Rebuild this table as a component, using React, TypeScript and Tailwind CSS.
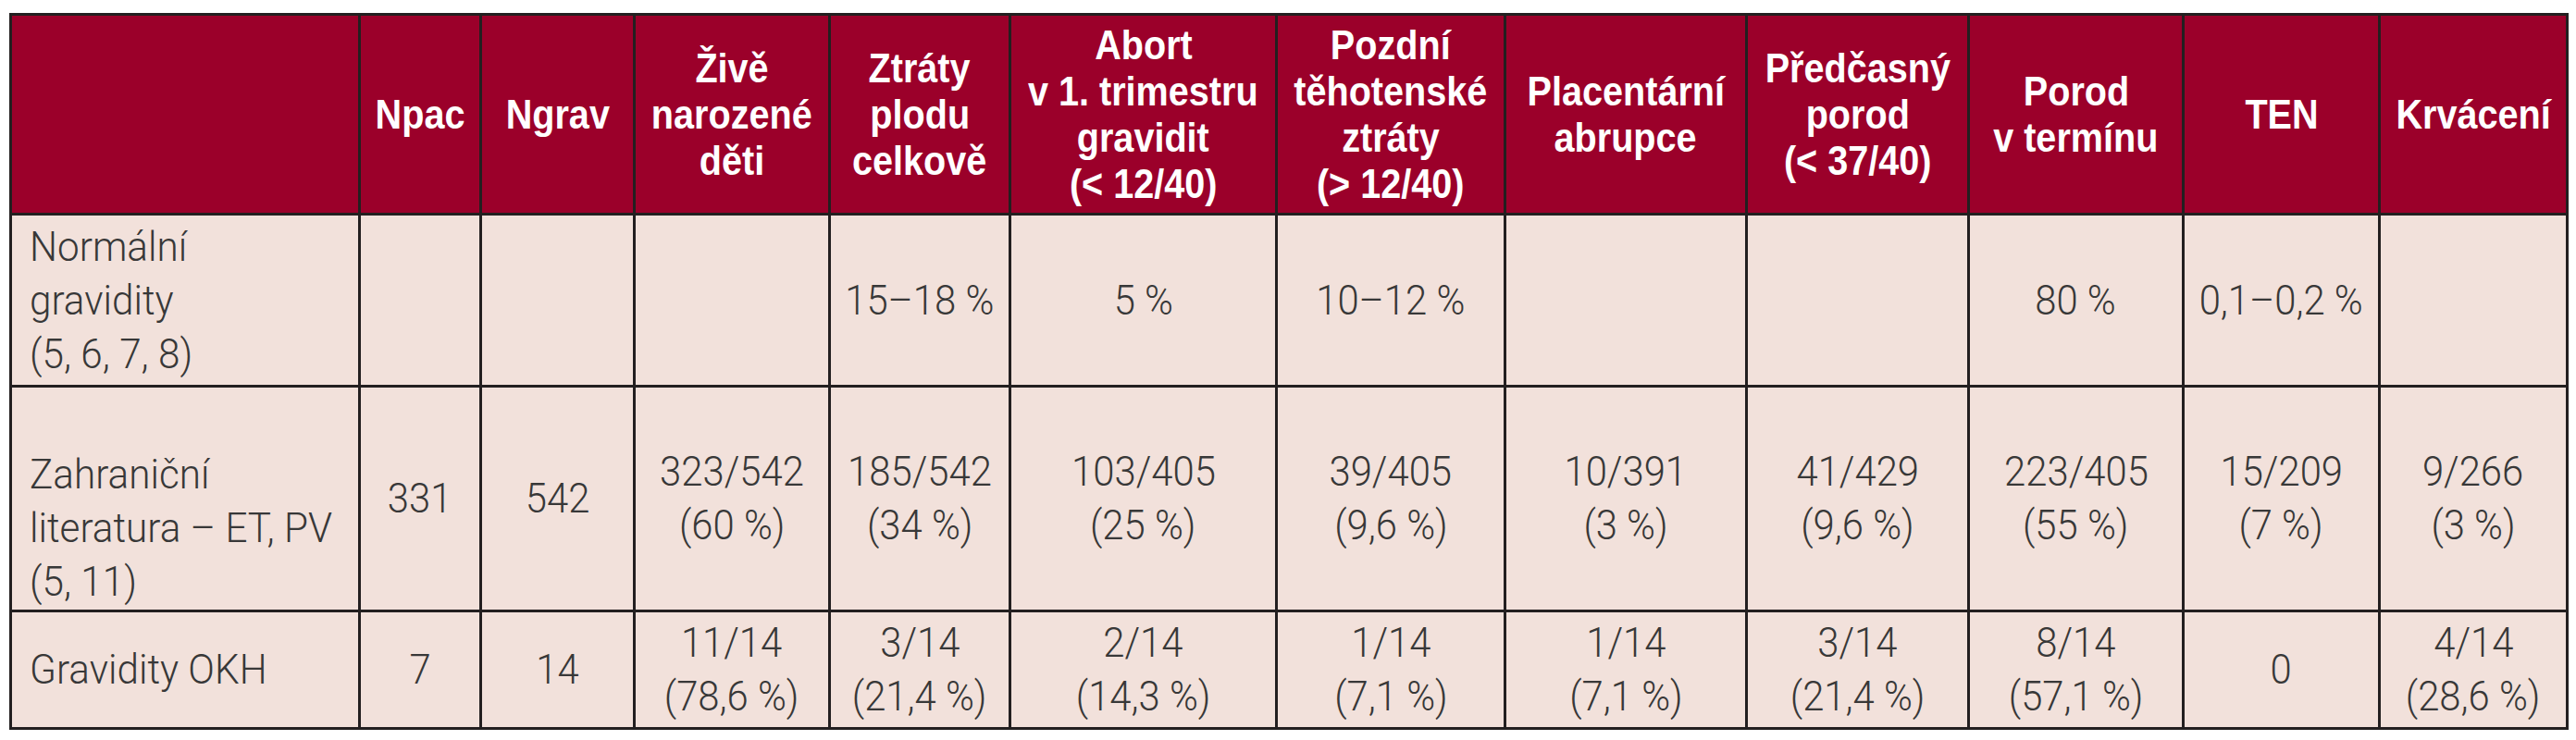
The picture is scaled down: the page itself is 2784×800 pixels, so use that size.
const headers: string[][] = [
  [],
  ["Npac"],
  ["Ngrav"],
  ["Živě", "narozené", "děti"],
  ["Ztráty", "plodu", "celkově"],
  ["Abort", "v 1. trimestru", "gravidit", "(< 12/40)"],
  ["Pozdní", "těhotenské", "ztráty", "(> 12/40)"],
  ["Placentární", "abrupce"],
  ["Předčasný", "porod", "(< 37/40)"],
  ["Porod", "v termínu"],
  ["TEN"],
  ["Krvácení"],
];

type Row = { label: string[]; labelAlign: "center" | "end"; cells: string[][] };

const rows: Row[] = [
  {
    label: ["Normální", "gravidity", "(5, 6, 7, 8)"],
    labelAlign: "center",
    cells: [[], [], [], ["15–18 %"], ["5 %"], ["10–12 %"], [], [], ["80 %"], ["0,1–0,2 %"], []],
  },
  {
    label: ["Zahraniční", "literatura – ET, PV", "(5, 11)"],
    labelAlign: "end",
    cells: [
      ["331"],
      ["542"],
      ["323/542", "(60 %)"],
      ["185/542", "(34 %)"],
      ["103/405", "(25 %)"],
      ["39/405", "(9,6 %)"],
      ["10/391", "(3 %)"],
      ["41/429", "(9,6 %)"],
      ["223/405", "(55 %)"],
      ["15/209", "(7 %)"],
      ["9/266", "(3 %)"],
    ],
  },
  {
    label: ["Gravidity OKH"],
    labelAlign: "center",
    cells: [
      ["7"],
      ["14"],
      ["11/14", "(78,6 %)"],
      ["3/14", "(21,4 %)"],
      ["2/14", "(14,3 %)"],
      ["1/14", "(7,1 %)"],
      ["1/14", "(7,1 %)"],
      ["3/14", "(21,4 %)"],
      ["8/14", "(57,1 %)"],
      ["0"],
      ["4/14", "(28,6 %)"],
    ],
  },
];

function Lines({ lines, className }: { lines: string[]; className: string }) {
  return (
    <>
      {lines.map((l, i) => (
        <span key={i} className={"block whitespace-nowrap " + className}>
          {l}
        </span>
      ))}
    </>
  );
}

const body =
  "bg-[#f2e1db] text-[44px] font-light leading-[58px] text-[#383838] [font-family:Roboto,'Liberation_Sans',sans-serif]";

export default function App() {
  return (
    <main className="min-h-screen bg-white pl-[10px] pt-[14px]">
      <div className="grid w-fit grid-cols-[374px_128px_163px_208px_192px_285px_244px_258px_237px_229px_209px_200px] grid-rows-[213px_183px_240px_124px] gap-[3px] bg-[#231f20] p-[3px]">
        {/* header */}
        {headers.map((h, i) => (
          <div
            key={"h" + i}
            className="flex flex-col items-center justify-center bg-[#9b002a] text-center text-[45px] font-bold leading-[50px] text-white [font-family:'Liberation_Sans',sans-serif]"
          >
            <Lines lines={h} className="origin-center scale-x-[0.88]" />
          </div>
        ))}

        {/* body rows */}
        {rows.map((r, ri) => (
          <div key={"r" + ri} className="contents">
            <div
              className={
                r.labelAlign === "end"
                  ? "flex flex-col items-start justify-end pb-[1px] pl-[19px] " + body
                  : "flex flex-col items-start justify-center pl-[19px] " + body
              }
            >
              <Lines lines={r.label} className="origin-left scale-x-[0.96]" />
            </div>
            {r.cells.map((c, ci) => (
              <div key={ci} className={"flex flex-col items-center justify-center text-center " + body}>
                <Lines lines={c} className="origin-center scale-x-[0.95]" />
              </div>
            ))}
          </div>
        ))}
      </div>
    </main>
  );
}
